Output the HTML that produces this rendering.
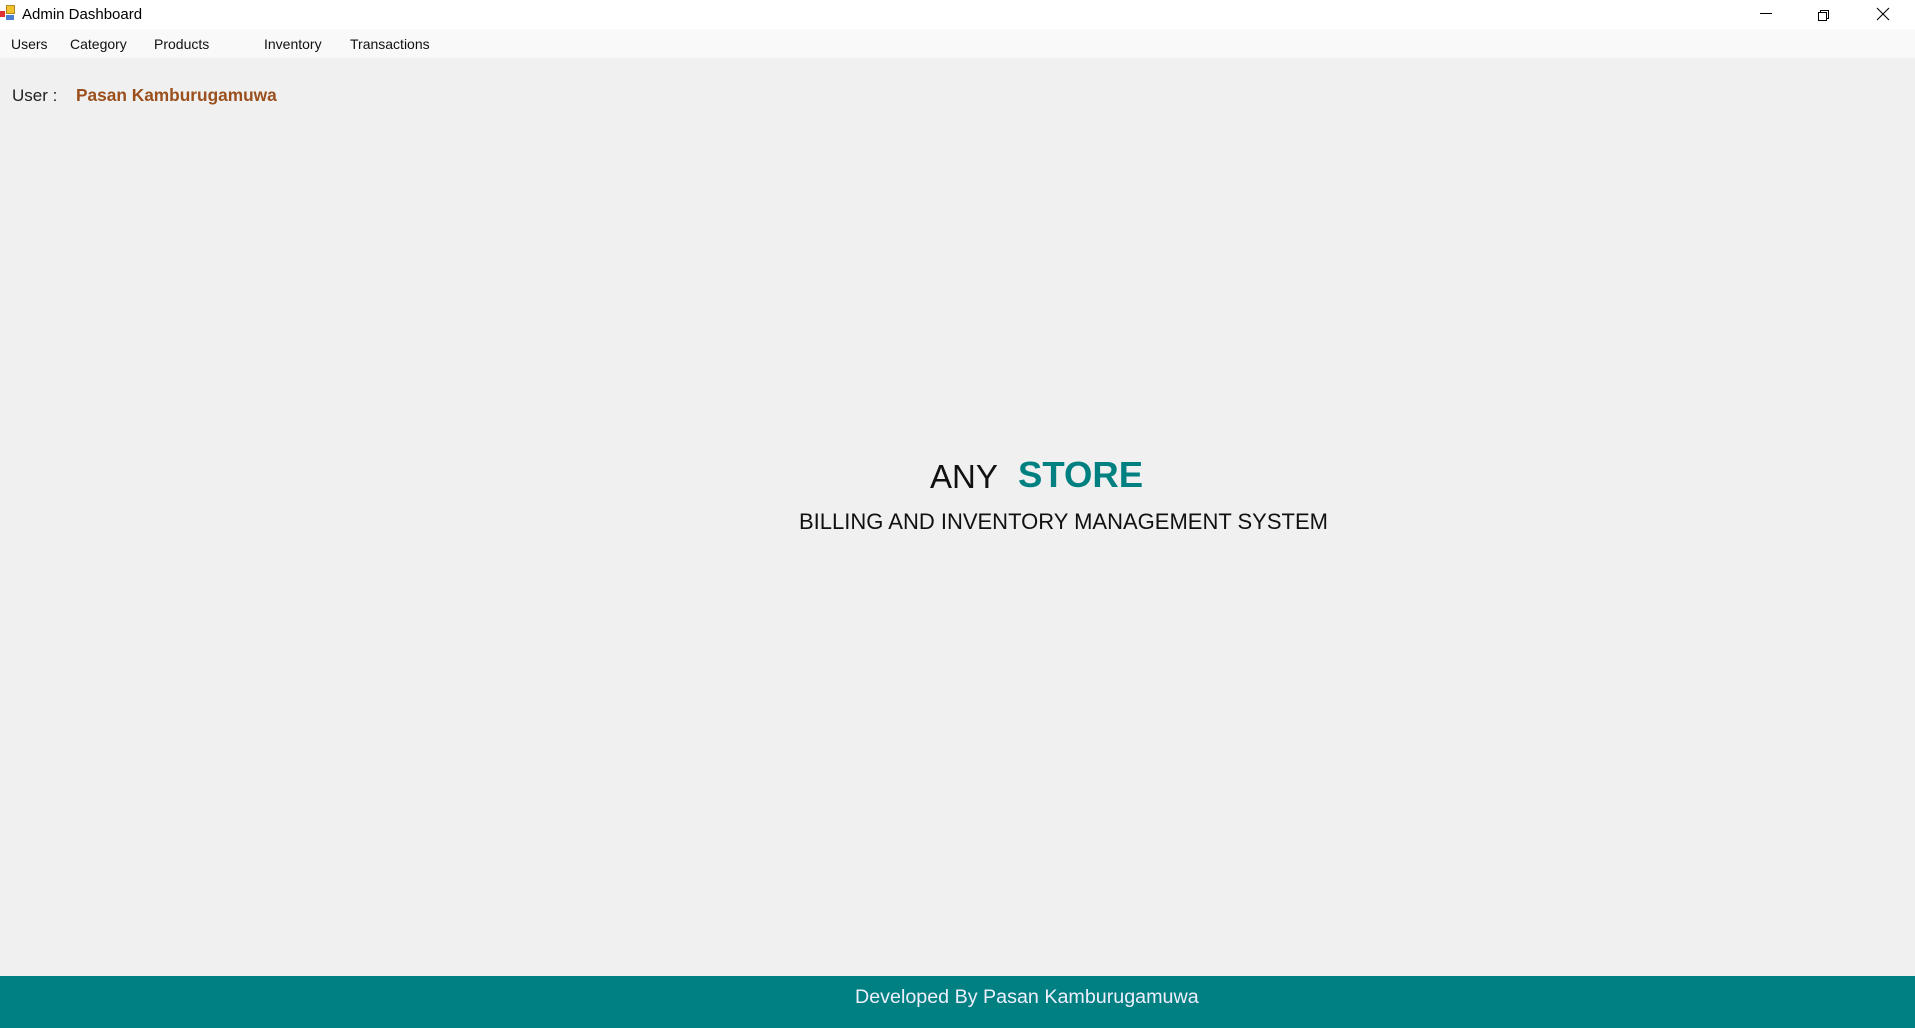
<!DOCTYPE html>
<html><head><meta charset="utf-8"><style>
*{margin:0;padding:0;box-sizing:border-box}
html,body{width:1915px;height:1028px;overflow:hidden;background:#f0f0f0;font-family:"Liberation Sans",sans-serif;position:relative}
.t{position:absolute;white-space:nowrap;line-height:1}
</style></head><body>
<div style="position:absolute;left:0;top:0;width:1915px;height:29px;background:#fff"></div>
<div style="position:absolute;left:0;top:29px;width:1915px;height:30px;background:#f9f9f9;border-bottom:1px solid #f0f0f0"></div>
<div style="position:absolute;left:0;top:11px;width:5px;height:6px;background:#d33"></div>
<div style="position:absolute;left:6px;top:5px;width:9px;height:9px;background:#f2c12e;border:1px solid #b08a20"></div>
<div style="position:absolute;left:6px;top:15px;width:8px;height:5px;background:#4a7fd6"></div>
<div class="t" style="left:22px;top:7px;font-size:15px;color:#000">Admin Dashboard</div>
<div style="position:absolute;left:1760px;top:13px;width:12px;height:1px;background:#000"></div>
<div style="position:absolute;left:1820px;top:10px;width:9px;height:9px;border:1px solid #000;background:#fff"></div>
<div style="position:absolute;left:1818px;top:12px;width:9px;height:9px;border:1px solid #000;background:#fff"></div>
<svg style="position:absolute;left:1876px;top:7px" width="14" height="14"><path d="M1 1L13 13M13 1L1 13" stroke="#000" stroke-width="1.1"/></svg>
<div class="t" style="left:11px;top:37px;font-size:14px;color:#111">Users</div>
<div class="t" style="left:70px;top:37px;font-size:14px;color:#111">Category</div>
<div class="t" style="left:154px;top:37px;font-size:14px;color:#111">Products</div>
<div class="t" style="left:264px;top:37px;font-size:14px;color:#111">Inventory</div>
<div class="t" style="left:350px;top:37px;font-size:14px;color:#111">Transactions</div>
<div class="t" style="left:12px;top:87px;font-size:17px;color:#222">User :</div>
<div class="t" style="left:76px;top:87px;font-size:17.3px;font-weight:bold;color:#9a4f1c">Pasan Kamburugamuwa</div>
<div class="t" style="left:930px;top:460px;font-size:33px;color:#111">ANY</div>
<div class="t" style="left:1018px;top:457px;font-size:36.5px;font-weight:bold;color:#008080">STORE</div>
<div class="t" style="left:799px;top:511px;font-size:22px;color:#111">BILLING AND INVENTORY MANAGEMENT SYSTEM</div>
<div style="position:absolute;left:0;top:976px;width:1915px;height:52px;background:#008080"></div>
<div class="t" style="left:855px;top:988px;font-size:19.7px;color:#eef">Developed By Pasan Kamburugamuwa</div>
</body></html>
